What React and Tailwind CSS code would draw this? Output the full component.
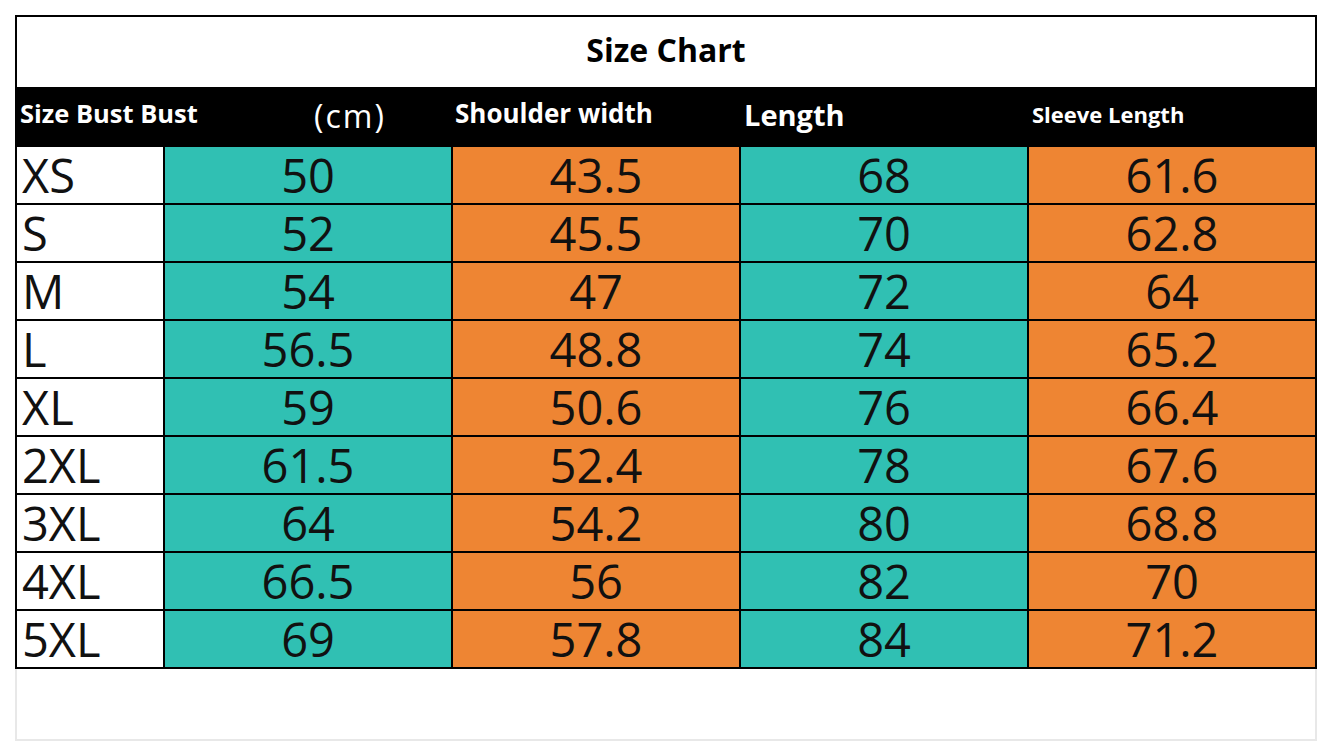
const rows = [
  ["XS", "50", "43.5", "68", "61.6"],
  ["S", "52", "45.5", "70", "62.8"],
  ["M", "54", "47", "72", "64"],
  ["L", "56.5", "48.8", "74", "65.2"],
  ["XL", "59", "50.6", "76", "66.4"],
  ["2XL", "61.5", "52.4", "78", "67.6"],
  ["3XL", "64", "54.2", "80", "68.8"],
  ["4XL", "66.5", "56", "82", "70"],
  ["5XL", "69", "57.8", "84", "71.2"],
];

const font = { fontFamily: '"Open Sans", "Noto Sans", sans-serif' };

export default function App() {
  return (
    <div className="min-h-screen bg-white pt-[15px] pl-[15px]" style={font}>
      <div className="w-[1302px]">
        <div className="border-2 border-black">
          <div className="h-[70px] flex items-center justify-center bg-white pb-[5px]">
            <span className="text-[32px] font-bold text-black leading-none">Size Chart</span>
          </div>
          <div className="grid grid-cols-[146px_286px_286px_286px_286px] gap-[2px] bg-black">
            <div className="h-[58px] flex items-center pl-[3px] pb-[5px] text-white font-bold text-[25.5px] whitespace-nowrap">
              Size Bust Bust
            </div>
            <div className="h-[58px] flex items-center pl-[149px] text-white text-[32px] tracking-[2px] whitespace-nowrap">
              (cm)
            </div>
            <div className="h-[58px] flex items-center pl-[2px] pb-[5px] text-white font-bold text-[26px] whitespace-nowrap">
              Shoulder width
            </div>
            <div className="h-[58px] flex items-center pl-[3px] pb-[2px] text-white font-bold text-[29px] whitespace-nowrap">
              Length
            </div>
            <div className="h-[58px] flex items-center pl-[3px] pb-[3px] text-white font-bold text-[22px] whitespace-nowrap">
              Sleeve Length
            </div>
            {rows.map((r) => (
              <Row key={r[0]} r={r} />
            ))}
          </div>
        </div>
        <div className="h-[72px] border-2 border-t-0 border-[#e8e8e8] bg-white"></div>
      </div>
    </div>
  );
}

function Row({ r }) {
  const colors = ["bg-white", "bg-[#30c0b3]", "bg-[#ee8533]", "bg-[#30c0b3]", "bg-[#ee8533]"];
  return (
    <>
      {r.map((v, i) => (
        <div
          key={i}
          className={`h-[56px] flex items-center ${colors[i]} ${
            i === 0 ? "justify-start pl-[5px]" : "justify-center"
          } text-[47px] text-[#111] leading-none`}
        >
          {v}
        </div>
      ))}
    </>
  );
}
